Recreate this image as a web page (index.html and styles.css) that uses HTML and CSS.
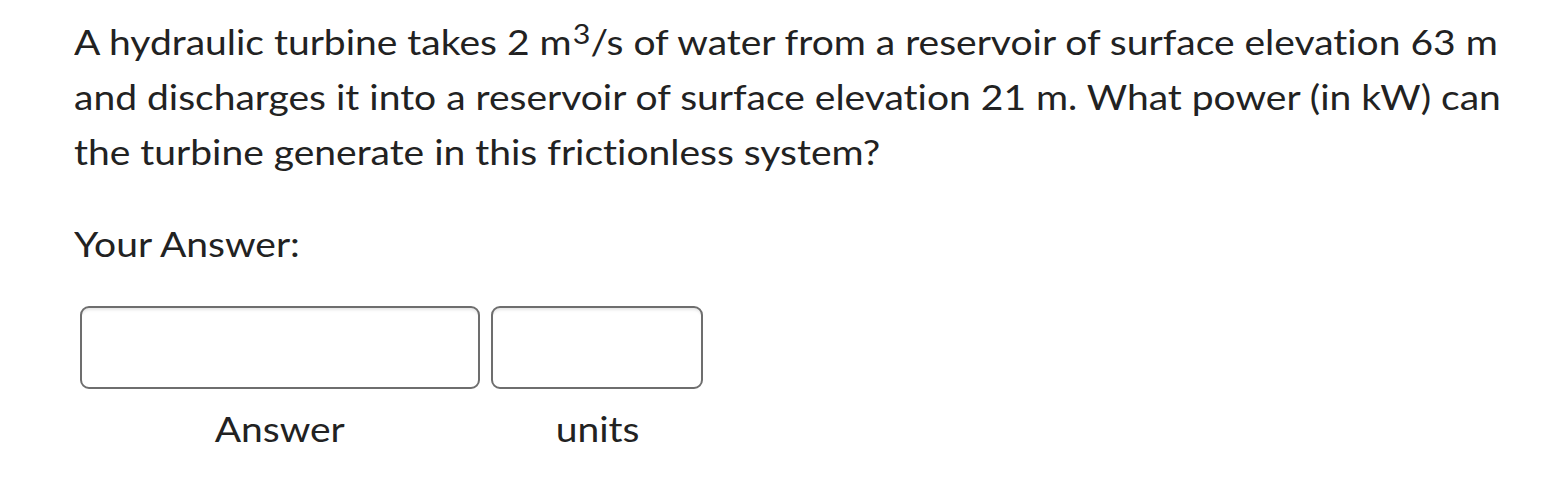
FILE: index.html
```html
<!DOCTYPE html>
<html>
<head>
<meta charset="utf-8">
<link rel="stylesheet" href="styles.css">
</head>
<body>
<div class="page">
  <p class="question stretch">A hydraulic turbine takes 2 m<sup>3</sup>/s of water from a reservoir of surface elevation 63 m and discharges it into a reservoir of surface elevation 21 m. What power (in kW) can the turbine generate in this frictionless system?</p>
  <p class="your stretch">Your Answer:</p>
  <div class="answers">
    <div class="field field-answer">
      <div class="box"></div>
      <div class="label"><span class="stretch-c">Answer</span></div>
    </div>
    <div class="field field-units">
      <div class="box"></div>
      <div class="label"><span class="stretch-c">units</span></div>
    </div>
  </div>
</div>
</body>
</html>
```
FILE: styles.css
```css
html, body {
  margin: 0;
  padding: 0;
  background: #fff;
  overflow: hidden;
}
.page {
  padding: 14px 0 0 74px;
  font-family: Lato, "Noto Sans", sans-serif;
  color: #222;
  font-size: 34px;
  font-variant-ligatures: none;
}
.stretch {
  transform: scaleX(1.147);
  transform-origin: left top;
}
.stretch-c {
  display: inline-block;
  transform: scaleX(1.147);
  transform-origin: center top;
}
.question {
  margin: 0;
  width: 1255px;
  line-height: 55px;
}
.question sup {
  font-size: 0.78em;
  line-height: 0;
  vertical-align: 0.42em;
  padding-left: 1px;
}
.your {
  margin: 37px 0 0 0;
  width: fit-content;
  line-height: 55px;
}
.answers {
  display: flex;
  gap: 11px;
  margin: 35px 0 0 6px;
}
.field {
  display: flex;
  flex-direction: column;
  align-items: center;
}
.field-answer .box {
  width: 400px;
}
.field-units .box {
  width: 212px;
}
.box {
  height: 83px;
  box-sizing: border-box;
  border: 2px solid #6e6e6e;
  border-radius: 9px;
  box-shadow: inset 0 4px 3px -2px #e6e6e6;
}
.label {
  margin-top: 18px;
  line-height: 44px;
}
```
